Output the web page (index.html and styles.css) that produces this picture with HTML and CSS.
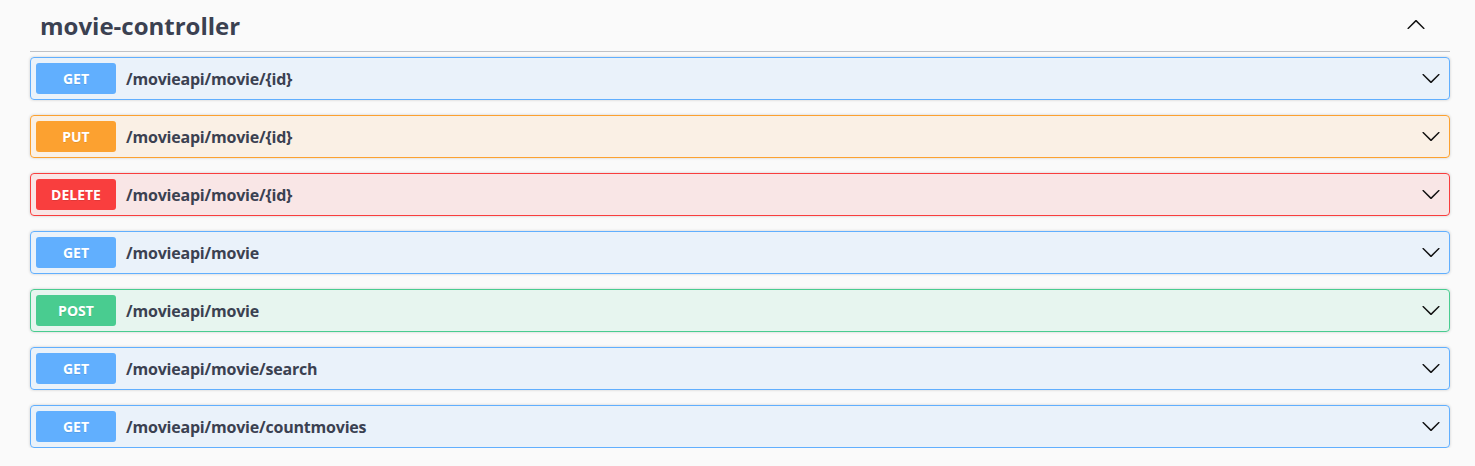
FILE: index.html
```html
<!DOCTYPE html>
<html lang="en">
<head>
<meta charset="utf-8">
<title>movie-controller</title>
<link rel="stylesheet" href="styles.css">
</head>
<body>
<div class="wrapper">
  <section class="tag-section">
    <h3 class="tag">
      <span class="tag-name">movie-controller</span>
      <svg class="arrow" width="20" height="20" viewBox="0 0 20 20"><path d="M2.582 13.891c-.272.268-.709.268-.979 0s-.271-.701 0-.969l7.908-7.83c.27-.268.707-.268.979 0l7.908 7.83c.27.268.27.701 0 .969-.271.268-.709.268-.979 0L10 6.75l-7.418 7.141z"/></svg>
    </h3>
    <div class="ops">
      <div class="op op-get"><span class="method">GET</span><span class="path">/movieapi/movie/{id}</span><svg class="arrow" width="20" height="20" viewBox="0 0 20 20"><path d="M17.418 6.109c.272-.268.709-.268.979 0s.271.701 0 .969l-7.908 7.83c-.27.268-.707.268-.979 0l-7.908-7.83c-.27-.268-.27-.701 0-.969.271-.268.709-.268.979 0L10 13.25l7.418-7.141z"/></svg></div>
      <div class="op op-put"><span class="method">PUT</span><span class="path">/movieapi/movie/{id}</span><svg class="arrow" width="20" height="20" viewBox="0 0 20 20"><path d="M17.418 6.109c.272-.268.709-.268.979 0s.271.701 0 .969l-7.908 7.83c-.27.268-.707.268-.979 0l-7.908-7.83c-.27-.268-.27-.701 0-.969.271-.268.709-.268.979 0L10 13.25l7.418-7.141z"/></svg></div>
      <div class="op op-delete"><span class="method">DELETE</span><span class="path">/movieapi/movie/{id}</span><svg class="arrow" width="20" height="20" viewBox="0 0 20 20"><path d="M17.418 6.109c.272-.268.709-.268.979 0s.271.701 0 .969l-7.908 7.83c-.27.268-.707.268-.979 0l-7.908-7.83c-.27-.268-.27-.701 0-.969.271-.268.709-.268.979 0L10 13.25l7.418-7.141z"/></svg></div>
      <div class="op op-get"><span class="method">GET</span><span class="path">/movieapi/movie</span><svg class="arrow" width="20" height="20" viewBox="0 0 20 20"><path d="M17.418 6.109c.272-.268.709-.268.979 0s.271.701 0 .969l-7.908 7.83c-.27.268-.707.268-.979 0l-7.908-7.83c-.27-.268-.27-.701 0-.969.271-.268.709-.268.979 0L10 13.25l7.418-7.141z"/></svg></div>
      <div class="op op-post"><span class="method">POST</span><span class="path">/movieapi/movie</span><svg class="arrow" width="20" height="20" viewBox="0 0 20 20"><path d="M17.418 6.109c.272-.268.709-.268.979 0s.271.701 0 .969l-7.908 7.83c-.27.268-.707.268-.979 0l-7.908-7.83c-.27-.268-.27-.701 0-.969.271-.268.709-.268.979 0L10 13.25l7.418-7.141z"/></svg></div>
      <div class="op op-get"><span class="method">GET</span><span class="path">/movieapi/movie/search</span><svg class="arrow" width="20" height="20" viewBox="0 0 20 20"><path d="M17.418 6.109c.272-.268.709-.268.979 0s.271.701 0 .969l-7.908 7.83c-.27.268-.707.268-.979 0l-7.908-7.83c-.27-.268-.27-.701 0-.969.271-.268.709-.268.979 0L10 13.25l7.418-7.141z"/></svg></div>
      <div class="op op-get"><span class="method">GET</span><span class="path">/movieapi/movie/countmovies</span><svg class="arrow" width="20" height="20" viewBox="0 0 20 20"><path d="M17.418 6.109c.272-.268.709-.268.979 0s.271.701 0 .969l-7.908 7.83c-.27.268-.707.268-.979 0l-7.908-7.83c-.27-.268-.27-.701 0-.969.271-.268.709-.268.979 0L10 13.25l7.418-7.141z"/></svg></div>
    </div>
  </section>
</div>
</body>
</html>
```
FILE: styles.css
```css
html, body {
  margin: 0;
  padding: 0;
  background: #fafafa;
}
body {
  font-family: "Open Sans", "Liberation Sans", sans-serif;
  color: #3b4151;
}
.wrapper {
  padding: 0 25px 0 30px;
}
.tag {
  display: flex;
  align-items: center;
  margin: 0 0 5px;
  padding: 10px 24px 10px 10px;
  border-bottom: 1px solid rgba(59, 65, 81, 0.3);
  font-size: 24px;
  line-height: 31px;
  font-weight: 700;
  color: #3b4151;
}
.tag-name {
  flex: 1;
}
.arrow {
  display: block;
  fill: #111;
  flex: none;
}
.tag .arrow {
  margin-top: -2px;
}
.ops {
  display: flex;
  flex-direction: column;
  gap: 15px;
}
.op {
  display: flex;
  align-items: center;
  padding: 5px 8px 5px 5px;
  border: 1px solid #61affe;
  border-radius: 4px;
  box-shadow: 0 0 3px rgba(0, 0, 0, 0.19);
}
.method {
  min-width: 80px;
  padding: 6px 0;
  margin-right: 10px;
  border-radius: 3px;
  text-align: center;
  font-size: 14px;
  line-height: 19px;
  font-weight: 700;
  color: #fff;
  text-shadow: 0 1px 0 rgba(0, 0, 0, 0.1);
}
.path {
  flex: 1;
  font-size: 16px;
  line-height: 20px;
  font-weight: 700;
  letter-spacing: -0.2px;
  color: #3b4151;
}
.op .arrow {
  margin-top: -2px;
}
.op-get {
  border-color: #61affe;
  background: rgba(97, 175, 254, 0.1);
}
.op-get .method { background: #61affe; }
.op-put {
  border-color: #fca130;
  background: rgba(252, 161, 48, 0.1);
}
.op-put .method { background: #fca130; }
.op-delete {
  border-color: #f93e3e;
  background: rgba(249, 62, 62, 0.1);
}
.op-delete .method { background: #f93e3e; }
.op-post {
  border-color: #49cc90;
  background: rgba(73, 204, 144, 0.1);
}
.op-post .method { background: #49cc90; }
```
